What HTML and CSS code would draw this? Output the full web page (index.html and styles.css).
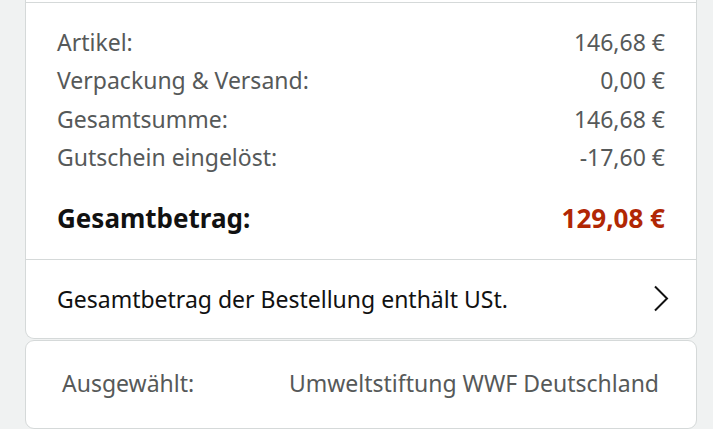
FILE: index.html
```html
<!DOCTYPE html>
<html>
<head>
	<title>Bestellübersicht</title>
	<link rel="stylesheet" href="styles.css">
</head>
<body>
	<div class="page">
		<div class="card card-top">
			<div class="prev"></div>
			<div class="summary">
				<div class="row"><span>Artikel:</span><span>146,68 €</span></div>
				<div class="row"><span>Verpackung &amp; Versand:</span><span>0,00 €</span></div>
				<div class="row"><span>Gesamtsumme:</span><span>146,68 €</span></div>
				<div class="row"><span>Gutschein eingelöst:</span><span>-17,60 €</span></div>
				<div class="row total"><span>Gesamtbetrag:</span><span class="amount">129,08 €</span></div>
			</div>
			<div class="tax">
				<span>Gesamtbetrag der Bestellung enthält USt.</span>
				<svg class="chevron" width="16" height="28" viewBox="0 0 16 28">
					<path d="M2 1.5 L14 13.5 L2 25.5" fill="none" stroke="#111" stroke-width="2"/>
				</svg>
			</div>
		</div>
		<div class="card card-bottom">
			<div class="charity">
				<span>Ausgewählt:</span>
				<span>Umweltstiftung WWF Deutschland</span>
			</div>
		</div>
	</div>
</body>
</html>
```

FILE: styles.css
```css
* {
	padding: 0px;
	margin: 0px;
	box-sizing: border-box;
}

body {
	background-color: #f0f2f2;
	font-family: "Noto Sans", "Open Sans", sans-serif;
	overflow: hidden;
}

.page {
	width: 672px;
	margin-left: 25px;
}

.card {
	background-color: #ffffff;
	border: 1px solid #d5d9d9;
}

.card-top {
	border-top: none;
	border-radius: 0 0 9px 9px;
}

.prev {
	height: 3px;
	border-bottom: 1px solid #d5d9d9;
}

.summary {
	padding: 20px 31px 0 31px;
	border-bottom: 1px solid #d5d9d9;
	height: 257px;
}

.row {
	display: flex;
	justify-content: space-between;
	font-size: 23px;
	line-height: 38.4px;
	color: #565959;
}

.total {
	margin-top: 22px;
	font-size: 26px;
	font-weight: bold;
	color: #111111;
}

.total .amount {
	color: #b12704;
}

.tax {
	height: 78px;
	display: flex;
	align-items: center;
	justify-content: space-between;
	padding: 0 27px 0 31px;
	font-size: 23px;
	color: #111111;
}

.card-bottom {
	margin-top: 1px;
	border-radius: 9px;
	height: 89px;
}

.charity {
	display: flex;
	justify-content: space-between;
	padding: 26px 37px 0 36px;
	font-size: 23px;
	color: #565959;
}
```
